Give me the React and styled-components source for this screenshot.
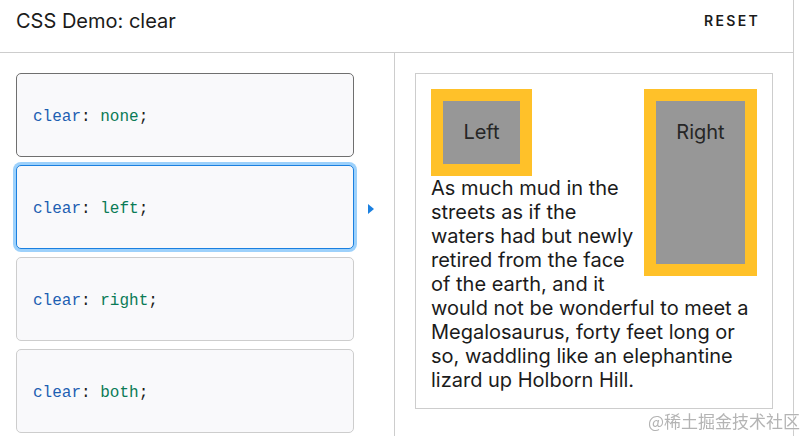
import styled, { createGlobalStyle } from 'styled-components'

const GlobalStyle = createGlobalStyle`
  html, body {
    margin: 0;
    padding: 0;
    background: #fff;
    overflow: hidden;
  }
  body {
    font-family: Inter, "Noto Sans", sans-serif;
    color: #1b1b1b;
  }
`

const options = ['none', 'left', 'right', 'both']

const App = () => {
  return (
    <>
      <GlobalStyle />
      <Page>
        <Header>
          <Title>CSS Demo: clear</Title>
          <ResetBtn>RESET</ResetBtn>
        </Header>
        <Body>
          <Choices>
            {options.map((v, i) => (
              <ChoiceRow key={v}>
                <Choice className={i === 0 ? 'hover' : i === 1 ? 'selected' : ''}>
                  <Prop>clear</Prop>
                  <Punct>: </Punct>
                  <Val>{v}</Val>
                  <Punct>;</Punct>
                </Choice>
                {i === 1 && <Marker />}
              </ChoiceRow>
            ))}
          </Choices>
          <OutputPane>
            <Output>
              <Floater className='left'>Left</Floater>
              <Floater className='right'>Right</Floater>
              <Para>
                As much mud in the streets as if the waters had but newly retired
                from the face of the earth, and it would not be wonderful to meet
                a Megalosaurus, forty feet long or so, waddling like an
                elephantine lizard up Holborn Hill.
              </Para>
            </Output>
          </OutputPane>
        </Body>
      </Page>
      <Watermark>@稀土掘金技术社区</Watermark>
    </>
  )
}

const Page = styled.div`
  width: 793px;
  height: 436px;
  border-right: 1px solid #cdcdcd;
  overflow: hidden;
`

const Header = styled.div`
  display: flex;
  justify-content: space-between;
  align-items: flex-start;
  height: 53px;
  box-sizing: border-box;
  padding: 9px 33px 0 16px;
  border-bottom: 1px solid #cdcdcd;
`

const Title = styled.h4`
  margin: 0;
  font-size: 20px;
  line-height: 24px;
  font-weight: 400;
  color: #1b1b1b;
`

const ResetBtn = styled.button`
  border: none;
  background: none;
  padding: 0;
  margin-top: 1px;
  font-family: Inter, sans-serif;
  font-size: 14px;
  line-height: 22px;
  font-weight: 600;
  letter-spacing: 2.3px;
  color: #1b1b1b;
`

const Body = styled.div`
  display: grid;
  grid-template-columns: 395px 1fr;
  height: 383px;
`

const Choices = styled.div`
  display: flex;
  flex-direction: column;
  gap: 8px;
  padding: 20px 0 0 16px;
  border-right: 1px solid #cdcdcd;
`

const ChoiceRow = styled.div`
  position: relative;
  width: 338px;
`

const Choice = styled.div`
  display: flex;
  align-items: center;
  height: 84px;
  box-sizing: border-box;
  padding: 3px 16px 0;
  background: #f9f9fb;
  border: 1px solid #cdcdcd;
  border-radius: 5px;
  font-family: "Liberation Mono", "DejaVu Sans Mono", monospace;
  font-size: 16px;
  white-space: pre;
  &.hover {
    border-color: #6f6f6f;
  }
  &.selected {
    border-color: #1b80e0;
    box-shadow: 0 0 0 3px #9dd1fb;
  }
`

const Prop = styled.span`
  color: #1d5fb2;
`

const Punct = styled.span`
  color: #1b1b1b;
`

const Val = styled.span`
  color: #0b7b56;
`

const Marker = styled.span`
  position: absolute;
  left: 352px;
  top: 39px;
  width: 0;
  height: 0;
  border-top: 5px solid transparent;
  border-bottom: 5px solid transparent;
  border-left: 6px solid #1b80e0;
`

const OutputPane = styled.div`
  padding: 20px 20px 0 20px;
`

const Output = styled.div`
  width: 358px;
  box-sizing: border-box;
  padding: 15px;
  border: 1px solid #cdcdcd;
  font-family: Inter, sans-serif;
  font-size: 20px;
  line-height: 24px;
  color: #1b1b1b;
`

const Floater = styled.div`
  box-sizing: content-box;
  background: #979797;
  border: 12px solid #ffc129;
  text-align: center;
  font-size: 20px;
  line-height: 25px;
  color: #262626;
  padding-top: 19px;
  &.left {
    float: left;
    width: 77px;
    height: 44px;
  }
  &.right {
    float: right;
    width: 89px;
    height: 144px;
  }
`

const Para = styled.p`
  clear: left;
  margin: 0 0 1px;
`

const Watermark = styled.div`
  position: fixed;
  right: 6px;
  bottom: 5px;
  font-family: "Noto Sans CJK SC", sans-serif;
  font-size: 17px;
  line-height: 20px;
  color: #b4b4b4;
  text-shadow: 0 0 2px #fff;
`

export default App
